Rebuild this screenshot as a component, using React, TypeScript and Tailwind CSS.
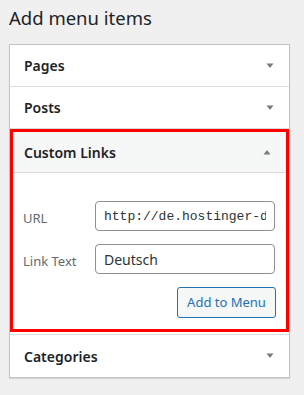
import React from "react";

const Caret = ({ up = false }: { up?: boolean }) => (
  <svg width="10" height="6" viewBox="0 0 10 6" className="shrink-0">
    {up ? (
      <polygon points="1.5,5.5 8.5,5.5 5,1" fill="#787c82" />
    ) : (
      <polygon points="1.5,0.5 8.5,0.5 5,5" fill="#787c82" />
    )}
  </svg>
);

const Row = ({ label, last = false }: { label: string; last?: boolean }) => (
  <div
    className={`flex h-[42px] items-center justify-between pl-[14px] pr-[14px] ${
      last ? "" : "border-b border-[#dcdcde]"
    }`}
  >
    <span className="text-[14px] font-semibold text-[#1d2327]">{label}</span>
    <Caret />
  </div>
);

export default function App() {
  return (
    <div
      className="h-[395px] w-[304px] overflow-hidden bg-[#f0f0f1] pl-[9px] pr-[14px] pt-[5px]"
      style={{ fontFamily: '"Noto Sans", "Open Sans", sans-serif' }}
    >
      <h2 className="m-0 h-[39px] text-[18.5px] leading-[26px] font-normal text-[#1d2327]">
        Add menu items
      </h2>
      <div className="w-[281px] border border-[#c3c4c7] bg-white shadow-[0_1px_1px_rgba(0,0,0,0.1)]">
        <Row label="Pages" />
        <Row label="Posts" />
        <div className="border-[3px] border-[#ff0000]">
          <div className="flex h-[41px] items-center justify-between border-b border-[#dcdcde] bg-[#f6f7f7] pl-[11px] pr-[14px]">
            <span className="text-[14px] font-semibold text-[#1d2327]">Custom Links</span>
            <Caret up />
          </div>
          <div className="flex flex-col pl-[10px] pr-[10px] pt-[28px] pb-[11px]">
            <div className="flex items-center">
              <label className="mt-[5px] w-[72px] text-[13px] text-[#646970]">URL</label>
              <input
                readOnly
                value="http://de.hostinger-dev.com"
                className="h-[30px] w-[180px] rounded-[4px] border border-[#8c8f94] bg-white px-[8px] text-[13px] text-[#2c3338] outline-none"
                style={{ fontFamily: '"Liberation Mono", monospace' }}
              />
            </div>
            <div className="mt-[13px] flex items-center">
              <label className="mt-[5px] w-[72px] text-[13px] text-[#646970]">Link Text</label>
              <input
                readOnly
                value="Deutsch"
                className="h-[30px] w-[180px] rounded-[4px] border border-[#8c8f94] bg-white px-[8px] text-[14px] text-[#2c3338] outline-none"
              />
            </div>
            <div className="mt-[13px] flex justify-end">
              <button className="h-[31px] w-[99px] rounded-[3px] border border-[#2271b1] bg-[#f6f7f7] text-[13px] text-[#2271b1]">
                Add to Menu
              </button>
            </div>
          </div>
        </div>
        <div className="mt-[2px] border-t border-[#dcdcde]">
          <Row label="Categories" last />
        </div>
      </div>
    </div>
  );
}
